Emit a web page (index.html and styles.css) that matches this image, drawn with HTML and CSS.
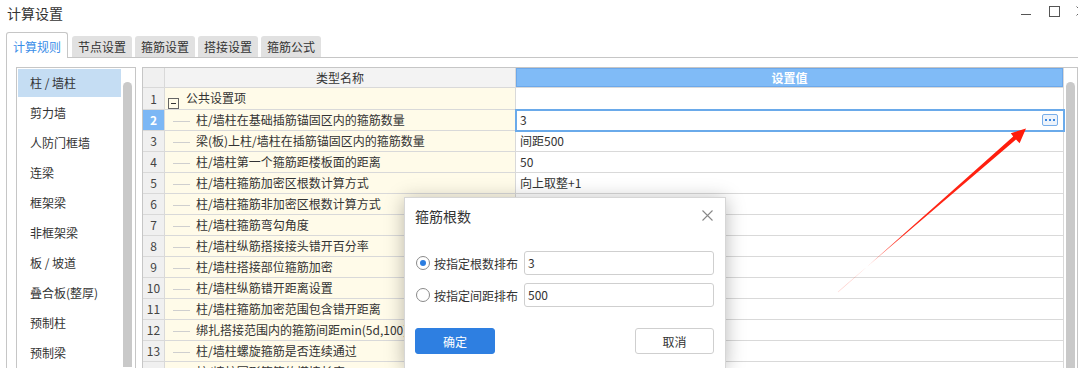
FILE: index.html
```html
<!DOCTYPE html>
<html lang="zh-CN">
<head>
  <meta charset="UTF-8">
  <title>计算设置</title>
  <link rel="stylesheet" href="styles.css">
</head>
<body>
  <div class="win">
    <div class="titlebar">
      <span class="title">计算设置</span>
      <div class="winctl">
        <span class="ctl-min"></span>
        <span class="ctl-max"></span>
        <svg class="ctl-close" width="10" height="10" viewBox="0 0 10 10"><path d="M0.5 0.5L9.5 9.5M9.5 0.5L0.5 9.5" stroke="#666" stroke-width="1" fill="none"/></svg>
      </div>
    </div>

    <div class="tabs">
      <div class="tab active">计算规则</div>
      <div class="tab">节点设置</div>
      <div class="tab">箍筋设置</div>
      <div class="tab">搭接设置</div>
      <div class="tab">箍筋公式</div>
    </div>

    <div class="panel">
      <div class="listbox">
        <ul class="items">
          <li class="sel">柱 / 墙柱</li>
          <li>剪力墙</li>
          <li>人防门框墙</li>
          <li>连梁</li>
          <li>框架梁</li>
          <li>非框架梁</li>
          <li>板 / 坡道</li>
          <li>叠合板(整厚)</li>
          <li>预制柱</li>
          <li>预制梁</li>
        </ul>
        <div class="vscroll"><div class="thumb"></div></div>
      </div>

      <div class="grid">
        <table class="tbl">
          <colgroup>
            <col class="c-num"><col class="c-name"><col class="c-val">
          </colgroup>
          <thead>
            <tr><th class="num"></th><th class="name">类型名称</th><th class="val">设置值</th></tr>
          </thead>
          <tbody>
            <tr><td class="num">1</td><td class="name"><span class="expander"></span>公共设置项</td><td class="val"></td></tr>
            <tr><td class="num cur-num">2</td><td class="name"><span class="branch"></span>柱/墙柱在基础插筋锚固区内的箍筋数量</td>
              <td class="val cur"><div class="edit"><span>3</span><span class="more"><i></i><i></i><i></i></span></div></td></tr>
            <tr><td class="num">3</td><td class="name"><span class="branch"></span>梁(板)上柱/墙柱在插筋锚固区内的箍筋数量</td><td class="val">间距500</td></tr>
            <tr><td class="num">4</td><td class="name"><span class="branch"></span>柱/墙柱第一个箍筋距楼板面的距离</td><td class="val">50</td></tr>
            <tr><td class="num">5</td><td class="name"><span class="branch"></span>柱/墙柱箍筋加密区根数计算方式</td><td class="val">向上取整+1</td></tr>
            <!-- 以下设置值被弹窗遮住 -->
            <tr><td class="num">6</td><td class="name"><span class="branch"></span>柱/墙柱箍筋非加密区根数计算方式</td><td class="val"></td></tr>
            <tr><td class="num">7</td><td class="name"><span class="branch"></span>柱/墙柱箍筋弯勾角度</td><td class="val"></td></tr>
            <tr><td class="num">8</td><td class="name"><span class="branch"></span>柱/墙柱纵筋搭接接头错开百分率</td><td class="val"></td></tr>
            <tr><td class="num">9</td><td class="name"><span class="branch"></span>柱/墙柱搭接部位箍筋加密</td><td class="val"></td></tr>
            <tr><td class="num">10</td><td class="name"><span class="branch"></span>柱/墙柱纵筋错开距离设置</td><td class="val"></td></tr>
            <tr><td class="num">11</td><td class="name"><span class="branch"></span>柱/墙柱箍筋加密范围包含错开距离</td><td class="val"></td></tr>
            <tr><td class="num">12</td><td class="name"><span class="branch"></span>绑扎搭接范围内的箍筋间距min(5d,100)</td><td class="val"></td></tr>
            <tr><td class="num">13</td><td class="name"><span class="branch"></span>柱/墙柱螺旋箍筋是否连续通过</td><td class="val"></td></tr>
            <tr><td class="num">14</td><td class="name"><span class="branch"></span>柱/墙柱圆形箍筋的搭接长度</td><td class="val"></td></tr>
          </tbody>
        </table>
        <div class="vscroll"><div class="thumb"></div></div>
      </div>
    </div>
  </div>

  <!-- 箍筋根数 弹窗 -->
  <div class="dialog">
    <div class="dlg-head">
      <span>箍筋根数</span>
      <svg class="dlg-close" width="11" height="11" viewBox="0 0 11 11"><path d="M0.5 0.5L10.5 10.5M10.5 0.5L0.5 10.5" stroke="#888" stroke-width="1.1" fill="none"/></svg>
    </div>
    <div class="opt first">
      <span class="radio on"></span>
      <span class="opt-label">按指定根数排布</span>
      <div class="field">3</div>
    </div>
    <div class="opt">
      <span class="radio"></span>
      <span class="opt-label">按指定间距排布</span>
      <div class="field">500</div>
    </div>
    <div class="dlg-foot">
      <button class="btn primary">确定</button>
      <button class="btn">取消</button>
    </div>
  </div>

  <svg class="arrow" width="1078" height="368" viewBox="0 0 1078 368">
    <defs>
      <linearGradient id="arrowFade" x1="838" y1="292" x2="1026" y2="129" gradientUnits="userSpaceOnUse">
        <stop offset="0" stop-color="#ff2a1a" stop-opacity="0.15"/>
        <stop offset="0.35" stop-color="#ff2a1a" stop-opacity="1"/>
        <stop offset="1" stop-color="#ff1a0a"/>
      </linearGradient>
    </defs>
    <polygon fill="url(#arrowFade)" points="838.3,292.3 1013.2,136.4 1010.8,133.2 1026,128.5 1019.6,143.2 1016,139.6 837.7,291.7"/>
  </svg>
</body>
</html>
```

FILE: styles.css
```css
* { box-sizing: border-box; }
html, body {
  margin: 0; padding: 0;
  width: 1078px; height: 368px;
  overflow: hidden;
  background: #fff;
}
body {
  position: relative;
  font-family: "Noto Sans CJK SC", "Noto Sans", sans-serif;
  font-size: 12px;
  color: #333;
}

/* 标题栏 */
.titlebar {
  height: 26px;
  display: flex; justify-content: space-between;
  padding-left: 7px;
}
.title { font-size: 14px; line-height: 26px; color: #333; }
.winctl { display: flex; align-items: flex-start; padding-top: 6px; margin-right: -8px; }
.ctl-min { width: 10px; height: 1px; background: #555; margin-top: 8px; }
.ctl-max { width: 11px; height: 11px; border: 1px solid #555; margin-left: 18px; }
.ctl-close { margin-left: 16px; }

/* 页签 */
.tabs {
  display: flex; align-items: flex-end; gap: 3px;
  height: 26px; margin-top: 6px; padding-left: 6px;
}
.tab {
  height: 21px; line-height: 21px;
  padding: 0 6px; margin-bottom: 1px;
  background: #e1e1e1; color: #333;
  border-radius: 3px 3px 0 0;
}
.tab.active {
  position: relative; z-index: 1;
  height: 26px; line-height: 27px;
  padding: 0 6px; margin: 0 1px 0 0;
  background: #fff; color: #3a8ee8;
  border: 1px solid #c6c6c6; border-bottom: none;
}

.panel {
  display: flex; align-items: flex-start; gap: 6px;
  height: 311px;
  margin: -1px 0 0 6px;
  padding: 9px 0 0 9px;
  border-top: 1px solid #c6c6c6;
  border-left: 1px solid #c6c6c6;
}

/* 左侧构件列表 */
.listbox {
  display: flex;
  width: 120px; height: 301px;
  padding: 1px;
  border: 1px solid #c6c6c6; border-bottom: none;
  overflow: hidden;
}
.items { list-style: none; margin: 0; padding: 0; width: 103px; }
.items li { height: 28px; line-height: 28px; margin-bottom: 2px; padding-left: 12px; white-space: nowrap; }
.items li.sel { background: #c5ddf3; }

.vscroll { flex: 1; padding: 13px 0 0 2px; }
.vscroll .thumb { width: 9px; height: 100%; background: #c9c9c9; border-radius: 5px 5px 0 0; }

/* 右侧表格 */
.grid {
  display: flex;
  width: 936px; height: 301px;
  border: 1px solid #c6c6c6; border-bottom: none;
  overflow: hidden;
}
.grid .vscroll { padding-top: 14px; }
.tbl { flex: none; align-self: flex-start; width: 921px; table-layout: fixed; border-collapse: separate; border-spacing: 0; }
.c-num { width: 22px; }
.c-name { width: 351px; }
.c-val { width: 548px; }
.tbl th, .tbl td {
  height: 21px; line-height: 20px;
  padding: 0 4px;
  border-right: 1px solid #d9d9d9; border-bottom: 1px solid #d9d9d9;
  white-space: nowrap; overflow: hidden;
  font-weight: normal; text-align: left;
}
.tbl th { height: 20px; line-height: 19px; background: #f3f3f3; text-align: center; }
.tbl th.val { background: #80bbf7; color: #fff; font-weight: bold; box-shadow: inset 0 0 0 1px #6ca8ea; }
.tbl .num { padding: 0; text-align: center; background: #f0f0f0; color: #444; }
.tbl td.cur-num { background: #7cb7f5; color: #fff; font-weight: bold; }
.tbl td.name { padding: 0; background: #fffbe9; }
.tbl td.val { background: #fff; }
.tbl td.cur { outline: 2px solid #6aaaea; outline-offset: -1px; padding-right: 5px; }

.expander {
  display: inline-flex; align-items: center; justify-content: center;
  width: 11px; height: 11px;
  margin: 0 7px 0 3px;
  border: 1px solid #666;
  vertical-align: -1px;
}
.expander::before { content: ""; width: 5px; height: 1px; background: #333; }
.branch {
  display: inline-block;
  width: 17px; height: 1px;
  margin: 0 6px 0 8px;
  background: #cfcfcf;
  vertical-align: middle;
}

.edit { display: flex; align-items: center; justify-content: space-between; }
.more {
  display: flex; align-items: center; justify-content: center; gap: 2px;
  width: 16px; height: 12px;
  border: 1px solid #78aeea; border-radius: 2px;
  background: #edf3fb;
}
.more i { width: 2px; height: 2px; background: #3a86e0; }

/* 弹窗 */
.dialog {
  position: absolute; left: 404px; top: 197px;
  width: 322px; height: 171px;
  padding: 0 11px 0 10px;
  background: #fff;
  border: 1px solid #d6d6d6; border-bottom: none;
  box-shadow: 0 2px 18px rgba(0,0,0,0.28);
}
.dlg-head {
  height: 35px;
  display: flex; align-items: center; justify-content: space-between;
  font-size: 14px; color: #333;
}
.dlg-close { margin-right: 1px; }
.opt { display: flex; align-items: center; height: 24px; margin-top: 8px; }
.opt.first { margin-top: 18px; }
.radio {
  display: inline-flex; align-items: center; justify-content: center;
  width: 14px; height: 14px; margin-left: 1px;
  border: 1px solid #8a8a8a; border-radius: 50%;
}
.radio.on::before { content: ""; width: 6px; height: 6px; border-radius: 50%; background: #2b7de0; }
.opt-label { margin-left: 4px; width: 84px; white-space: nowrap; }
.field {
  flex: 1; height: 24px; line-height: 22px;
  margin-left: 6px; padding-left: 3px;
  border: 1px solid #cfcfcf; border-radius: 3px;
}
.dlg-foot { display: flex; justify-content: space-between; margin-top: 21px; }
.btn {
  width: 79px; height: 26px;
  font-family: inherit; font-size: 12px; color: #333;
  background: #fff;
  border: 1px solid #cfcfcf; border-radius: 3px;
}
.btn.primary { width: 80px; background: #2e7fe1; border-color: #2e7fe1; color: #fff; }

.arrow { position: absolute; left: 0; top: 0; pointer-events: none; }
```
